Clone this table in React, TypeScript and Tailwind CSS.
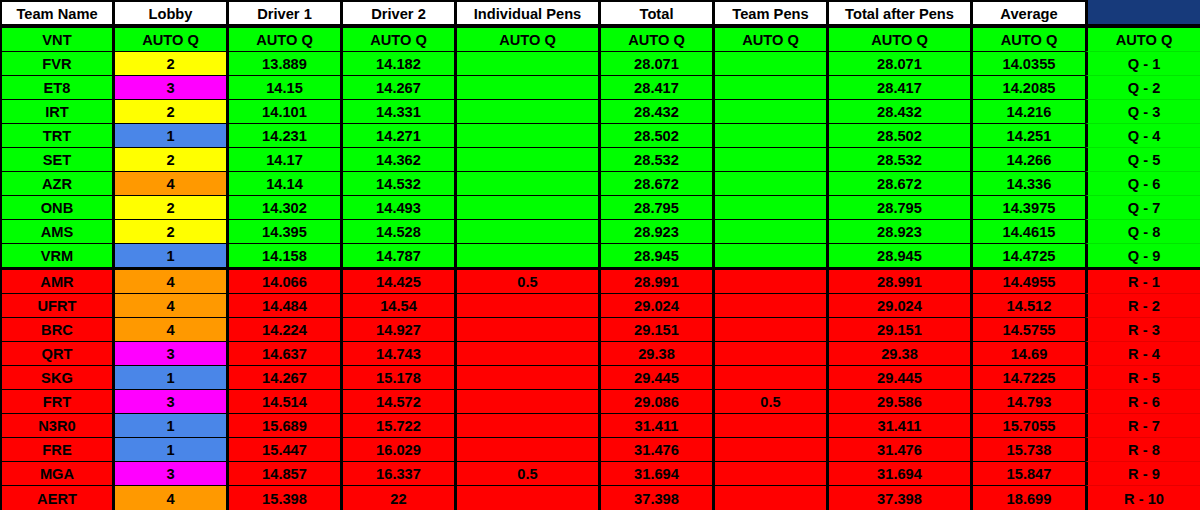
import React from "react";

const widths = ["w-[112px]", "w-[114px]", "w-[114px]", "w-[114px]", "w-[144px]", "w-[114px]", "w-[114px]", "w-[144px]", "w-[115px]", "w-[115px]"];
const headers = ["Team Name", "Lobby", "Driver 1", "Driver 2", "Individual Pens", "Total", "Team Pens", "Total after Pens", "Average", ""];

type Row = [string, string, string, string, string, string, string, string, string, string];

const green: Row[] = [
  ["VNT", "AUTO Q", "AUTO Q", "AUTO Q", "AUTO Q", "AUTO Q", "AUTO Q", "AUTO Q", "AUTO Q", "AUTO Q"],
  ["FVR", "2", "13.889", "14.182", "", "28.071", "", "28.071", "14.0355", "Q - 1"],
  ["ET8", "3", "14.15", "14.267", "", "28.417", "", "28.417", "14.2085", "Q - 2"],
  ["IRT", "2", "14.101", "14.331", "", "28.432", "", "28.432", "14.216", "Q - 3"],
  ["TRT", "1", "14.231", "14.271", "", "28.502", "", "28.502", "14.251", "Q - 4"],
  ["SET", "2", "14.17", "14.362", "", "28.532", "", "28.532", "14.266", "Q - 5"],
  ["AZR", "4", "14.14", "14.532", "", "28.672", "", "28.672", "14.336", "Q - 6"],
  ["ONB", "2", "14.302", "14.493", "", "28.795", "", "28.795", "14.3975", "Q - 7"],
  ["AMS", "2", "14.395", "14.528", "", "28.923", "", "28.923", "14.4615", "Q - 8"],
  ["VRM", "1", "14.158", "14.787", "", "28.945", "", "28.945", "14.4725", "Q - 9"],
];

const red: Row[] = [
  ["AMR", "4", "14.066", "14.425", "0.5", "28.991", "", "28.991", "14.4955", "R - 1"],
  ["UFRT", "4", "14.484", "14.54", "", "29.024", "", "29.024", "14.512", "R - 2"],
  ["BRC", "4", "14.224", "14.927", "", "29.151", "", "29.151", "14.5755", "R - 3"],
  ["QRT", "3", "14.637", "14.743", "", "29.38", "", "29.38", "14.69", "R - 4"],
  ["SKG", "1", "14.267", "15.178", "", "29.445", "", "29.445", "14.7225", "R - 5"],
  ["FRT", "3", "14.514", "14.572", "", "29.086", "0.5", "29.586", "14.793", "R - 6"],
  ["N3R0", "1", "15.689", "15.722", "", "31.411", "", "31.411", "15.7055", "R - 7"],
  ["FRE", "1", "15.447", "16.029", "", "31.476", "", "31.476", "15.738", "R - 8"],
  ["MGA", "3", "14.857", "16.337", "0.5", "31.694", "", "31.694", "15.847", "R - 9"],
  ["AERT", "4", "15.398", "22", "", "37.398", "", "37.398", "18.699", "R - 10"],
];

const lobbyBg: Record<string, string> = {
  "1": "bg-[#4a86e8]",
  "2": "bg-[#ffff00]",
  "3": "bg-[#ff00ff]",
  "4": "bg-[#ff9900]",
};

function DataRow({ row, base, bottom }: { row: Row; base: string; bottom: "thin" | "thick" | "none" }) {
  return (
    <div className="flex">
      {row.map((v, i) => {
        const bg = i === 1 && lobbyBg[v] ? lobbyBg[v] : base;
        const left = i === 0 ? "border-l-2" : "border-l-[3px]";
        let b = "";
        if (bottom === "thick") b = "border-b-[3px] border-b-black";
        else if (bottom === "thin") b = i === 9 ? "border-b border-b-black/10" : "border-b border-b-black";
        const h = bottom === "thick" ? "h-[26px]" : "h-[24px]";
        return (
          <div
            key={i}
            className={`${widths[i]} ${h} ${bg} ${left} border-l-black ${b} pt-[2px] shrink-0 flex items-center justify-center box-border`}
          >
            {v}
          </div>
        );
      })}
    </div>
  );
}

export default function App() {
  return (
    <div
      className="w-[1200px] h-[510px] overflow-hidden bg-white text-black font-bold text-[14.67px] leading-none"
      style={{ fontFamily: '"Liberation Sans", Arial, sans-serif' }}
    >
      <div className="flex">
        {headers.map((h, i) => (
          <div
            key={i}
            className={`${widths[i]} h-[28px] shrink-0 box-border border-b-4 border-b-black pt-[2px] ${
              i === 9 ? "bg-[#173a7b]" : "bg-white border-t-2 border-t-black"
            } ${i === 0 ? "border-l-2" : "border-l-[3px]"} border-l-black flex items-center justify-center`}
          >
            {h}
          </div>
        ))}
      </div>
      {green.map((r, i) => (
        <DataRow key={"g" + i} row={r} base="bg-[#00ff00]" bottom={i === green.length - 1 ? "thick" : "thin"} />
      ))}
      {red.map((r, i) => (
        <DataRow key={"r" + i} row={r} base="bg-[#ff0000]" bottom={i === red.length - 1 ? "none" : "thin"} />
      ))}
    </div>
  );
}
